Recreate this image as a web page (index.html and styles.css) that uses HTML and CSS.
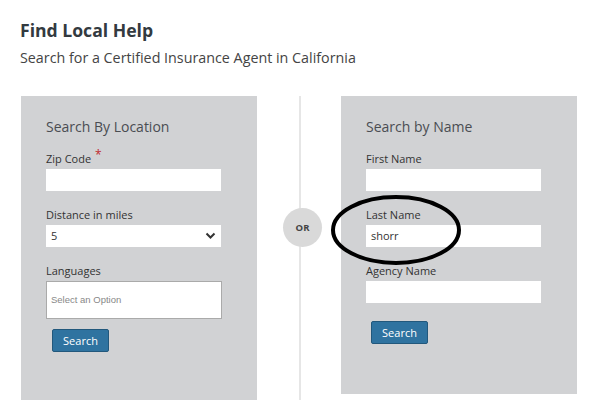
FILE: index.html
```html
<!DOCTYPE html>
<html>
<head>
<meta charset="utf-8">
<link rel="stylesheet" href="styles.css">
</head>
<body>
<div class="page">
  <h1 class="title">Find Local Help</h1>
  <p class="subtitle">Search for a Certified Insurance Agent in California</p>
  <div class="panels">
    <div class="panel panel-left">
      <h2 class="panel-title">Search By Location</h2>
      <div class="field">
        <label class="label">Zip Code <span class="req">*</span></label>
        <div class="input"></div>
      </div>
      <div class="field">
        <label class="label">Distance in miles</label>
        <div class="input select"><span>5</span>
          <svg class="chev" width="11" height="8" viewBox="0 0 11 8"><path d="M1.5 1.5 L5.5 5.5 L9.5 1.5" fill="none" stroke="#333" stroke-width="2"/></svg>
        </div>
      </div>
      <div class="field field-last-left">
        <label class="label">Languages</label>
        <div class="multi">Select an Option</div>
      </div>
      <button class="btn btn-left">Search</button>
    </div>
    <div class="divider">
      <div class="or">OR</div>
    </div>
    <div class="panel panel-right">
      <h2 class="panel-title">Search by Name</h2>
      <div class="field">
        <label class="label">First Name</label>
        <div class="input"></div>
      </div>
      <div class="field">
        <label class="label">Last Name</label>
        <div class="input"><span>shorr</span></div>
      </div>
      <div class="field field-last-right">
        <label class="label">Agency Name</label>
        <div class="input"></div>
      </div>
      <button class="btn btn-right">Search</button>
      <svg class="circle-mark" width="136" height="76" viewBox="0 0 136 76"><ellipse cx="68" cy="38" rx="63" ry="33" fill="none" stroke="#000" stroke-width="4"/></svg>
    </div>
  </div>
</div>
</body>
</html>
```
FILE: styles.css
```css
* { box-sizing: border-box; }
body {
  margin: 0;
  background: #fff;
  font-family: "Open Sans", "Noto Sans", sans-serif;
  color: #333;
}
.page { padding: 18px 0 0 20px; }
.title {
  margin: 0;
  font-size: 17.6px;
  font-weight: 700;
  line-height: 24px;
  color: #333a40;
}
.subtitle {
  margin: 6px 0 0 0;
  font-size: 14.3px;
  line-height: 20px;
  color: #444;
}
.panels {
  display: flex;
  margin-top: 28px;
  margin-left: 1px;
  align-items: flex-start;
}
.panel {
  position: relative;
  width: 236px;
  background: #d1d2d4;
  padding: 20px 0 0 25px;
}
.panel-left { height: 304px; }
.panel-right { height: 298px; }
.panel-title {
  margin: 0 0 13px 0;
  font-size: 14px;
  font-weight: 400;
  line-height: 22px;
  color: #4a4d52;
}
.field { margin-bottom: 16px; }
.label {
  display: block;
  font-size: 11px;
  line-height: 15px;
  height: 15px;
  margin-bottom: 3px;
  color: #333;
}
.req { color: #c0282d; font-size: 12px; line-height: 0; position: relative; top: -4px; margin-left: 1px; }
.input {
  width: 175px;
  height: 22px;
  background: #fff;
  font-size: 11px;
  line-height: 22px;
  padding-left: 5px;
  color: #333;
  display: flex;
  align-items: center;
  justify-content: space-between;
}
.select { padding-right: 5px; }
.multi {
  width: 176px;
  height: 38px;
  background: #fff;
  border: 1px solid #aaa;
  font-family: "Liberation Sans", Arial, sans-serif;
  font-size: 9.5px;
  color: #888;
  padding-left: 4px;
  line-height: 36px;
}
.field-last-left { margin-bottom: 10px; }
.field-last-right { margin-bottom: 18px; }
.btn {
  display: block;
  width: 57px;
  height: 23px;
  background: #2f73a0;
  border: 1px solid #22587c;
  border-radius: 2px;
  color: #fff;
  font-family: "Open Sans", sans-serif;
  font-size: 11px;
  padding: 0;
}
.btn-left { margin-left: 6px; }
.btn-right { margin-left: 5px; }
.divider {
  position: relative;
  width: 84px;
  height: 304px;
  display: flex;
  justify-content: center;
  padding-left: 2px;
}
.divider::before {
  content: "";
  display: block;
  width: 2px;
  height: 100%;
  background: #e6e6e6;
}
.or {
  position: absolute;
  left: 26px;
  top: 112px;
  width: 39px;
  height: 39px;
  border-radius: 50%;
  background: #d9d9d9;
  color: #444;
  font-size: 9.5px;
  font-weight: 700;
  display: flex;
  align-items: center;
  justify-content: center;
}
.circle-mark {
  position: absolute;
  left: -13px;
  top: 96px;
}
```
